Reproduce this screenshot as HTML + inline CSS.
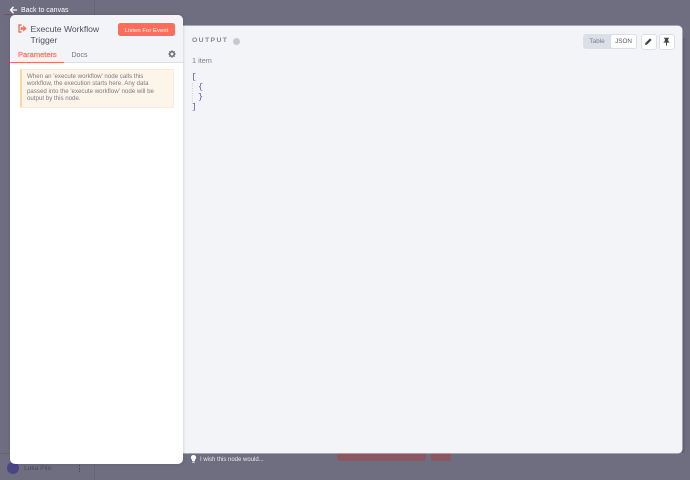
<!DOCTYPE html>
<html>
<head>
<meta charset="utf-8">
<style>
html,body{margin:0;padding:0}
body{width:690px;height:480px;overflow:hidden;position:relative;background:#6f6d80;font-family:"Liberation Sans","DejaVu Sans",sans-serif}
.a{position:absolute;white-space:nowrap}
svg{position:absolute;display:block}
</style>
</head>
<body>
<div class="a" style="left:94px;top:0;width:1px;height:480px;background:#656376"></div>
<div class="a" style="left:0;top:453px;width:94px;height:1px;background:#656376"></div>
<div class="a" style="left:682px;top:38px;width:3px;height:415px;background:#646274"></div>

<!-- behind bottom -->
<div class="a" style="left:337px;top:450px;width:89px;height:10.5px;background:#8b5763;border-radius:2px"></div>
<div class="a" style="left:431px;top:450px;width:20px;height:10.5px;background:#8b5763;border-radius:2px"></div>
<div class="a" style="left:7px;top:462px;width:12px;height:12px;border-radius:50%;background:#4a4585"></div>
<div class="a" style="left:24px;top:464px;font-size:6.6px;line-height:9px;color:#4b4a5b">Luka Pilic</div>
<div class="a" style="left:79px;top:465px;width:1px;height:7px;background:repeating-linear-gradient(#4b4a5b 0 1.5px,transparent 1.5px 2.75px)"></div>
<div class="a" style="left:4px;top:14px;width:8px;height:1px;background:#7f4a66"></div>

<!-- back -->
<svg style="left:9px;top:5px" width="9" height="10" viewBox="0 0 10 10"><path d="M5 1.4 1.7 5 5 8.6M2 5h7" stroke="#fff" stroke-width="1.5" fill="none"/></svg>
<div class="a" style="left:21px;top:6px;font-size:7px;line-height:10px;color:#fff">Back to canvas</div>

<!-- output panel -->
<div class="a" style="left:178px;top:26px;width:504px;height:427px;background:#f2f4f8;border-radius:0 4px 4px 0;box-shadow:0 0 0 .5px #dbdfe7">
</div>
<div class="a" style="left:192px;top:36px;font-size:6.8px;line-height:10px;font-weight:bold;letter-spacing:1.4px;color:#85858f">OUTPUT</div>
<div class="a" style="left:233px;top:38px;width:7px;height:7px;border-radius:50%;background:#c6c8d0"></div>
<div class="a" style="left:192px;top:56px;font-size:7.3px;line-height:10px;color:#7d7d8a">1 item</div>
<div class="a" style="left:191.5px;top:72px;font-family:'Liberation Mono',monospace;font-size:8.5px;line-height:10px;color:#5b50b8;white-space:pre">[<br><br><br>]</div>
<div class="a" style="left:198px;top:82px;font-family:'Liberation Mono',monospace;font-size:8.5px;line-height:10px;color:#5b50b8;white-space:pre">{<br>}</div>
<div class="a" style="left:192px;top:83px;width:1px;height:19px;background:repeating-linear-gradient(#cfd0da 0 1px,transparent 1px 2.5px)"></div>

<div class="a" style="left:583px;top:34px;width:54px;height:15px;background:#dbdfe7;border-radius:3px"></div>
<div class="a" style="left:611px;top:35px;width:25px;height:13px;background:#fff;border-radius:2px"></div>
<div class="a" style="left:583px;top:34px;width:28px;height:16px;text-align:center;font-size:6.5px;line-height:16px;color:#7d7d8a">Table</div>
<div class="a" style="left:611px;top:34px;width:25px;height:16px;text-align:center;font-size:6.3px;line-height:16px;color:#555">JSON</div>
<div class="a" style="left:641px;top:34px;width:14px;height:14px;background:#fff;border:1px solid #dbdfe7;border-radius:3px"></div>
<svg style="left:644px;top:37px" width="9" height="9" viewBox="0 0 9 9"><path d="M1 8 1.4 6 6 1.4 7.6 3 3 7.6Z" fill="#444"/></svg>
<div class="a" style="left:659px;top:34px;width:14px;height:14px;background:#fff;border:1px solid #dbdfe7;border-radius:3px"></div>
<svg style="left:662px;top:37px" width="9" height="9" viewBox="0 0 9 9"><path d="M2 .8h5v1H6l.3 2.3L7.8 5.6H5v3H4v-3H1.2L2.7 4.1 3 1.8H2Z" fill="#444"/></svg>

<!-- wish -->
<svg style="left:190px;top:455px" width="7" height="8" viewBox="0 0 7 8"><path d="M3.5 0a2.6 2.6 0 0 1 1.5 4.7V6H2V4.7A2.6 2.6 0 0 1 3.5 0ZM2.4 6.6h2.2V7.8H2.4Z" fill="#fff"/></svg>
<div class="a" style="left:200px;top:456px;font-size:6px;line-height:9px;color:#e9e9ef">I wish this node would...</div>

<!-- left panel -->
<div class="a" style="left:10px;top:15px;width:173px;height:449px;background:#fff;border-radius:5px;overflow:hidden;box-shadow:0 0 3px rgba(60,60,80,.25)">
  <div class="a" style="left:0;top:0;width:173px;height:47px;background:#f2f4f8"></div>
  <div class="a" style="left:0;top:47px;width:173px;height:1px;background:#dbdfe7"></div>
  <div class="a" style="left:20.5px;top:9px;font-size:8.6px;line-height:10.5px;color:#4f4f5c">Execute Workflow<br>Trigger</div>
  <div class="a" style="left:108px;top:8px;width:57px;height:13px;background:#ff6d5a;border-radius:2.5px"></div>
  <div class="a" style="left:108px;top:10px;width:57px;height:13px;text-align:center;font-size:5.9px;line-height:13px;color:#fff;letter-spacing:.05px">Listen For Event</div>
  <div class="a" style="left:8px;top:34.5px;font-size:7.5px;line-height:10px;color:#ff6d5a;-webkit-text-stroke:.2px #ff6d5a">Parameters</div>
  <div class="a" style="left:0;top:46.5px;width:54px;height:1.5px;background:#ff6d5a"></div>
  <div class="a" style="left:61.5px;top:35.5px;font-size:7px;line-height:10px;color:#6f6f7c">Docs</div>
  <svg style="left:157.5px;top:35px" width="8" height="8" viewBox="0 0 8 8"><circle cx="4" cy="4" r="2.3" fill="none" stroke="#666" stroke-width="1.5"/><path d="M4 .3v1M4 6.7v1M.3 4h1M6.7 4h1M1.4 1.4l.7.7M5.9 5.9l.7.7M1.4 6.6l.7-.7M5.9 2.1l.7-.7" stroke="#666" stroke-width="1.1"/></svg>
  <div class="a" style="left:10px;top:53.5px;width:151px;height:37px;background:#fef5ea;border:.5px solid #fbe9d1;border-left:2.5px solid #f7d6a3;border-radius:1px"></div>
  <div class="a" style="left:17px;top:57.5px;font-size:6.15px;line-height:7.6px;color:#7b7a84">When an 'execute workflow' node calls this<br>workflow, the execution starts here. Any data<br>passed into the 'execute workflow' node will be<br>output by this node.</div>
</div>
<svg style="left:18px;top:24px" width="9" height="9" viewBox="0 0 9 9"><path d="M3.5 1H1v7h2.5" fill="none" stroke="#ff6d5a" stroke-width="1.4"/><path d="M2.6 3.3h2.6V1.2L8.7 4.5 5.2 7.8V5.7H2.6Z" fill="#ff6d5a"/></svg>
</body>
</html>
